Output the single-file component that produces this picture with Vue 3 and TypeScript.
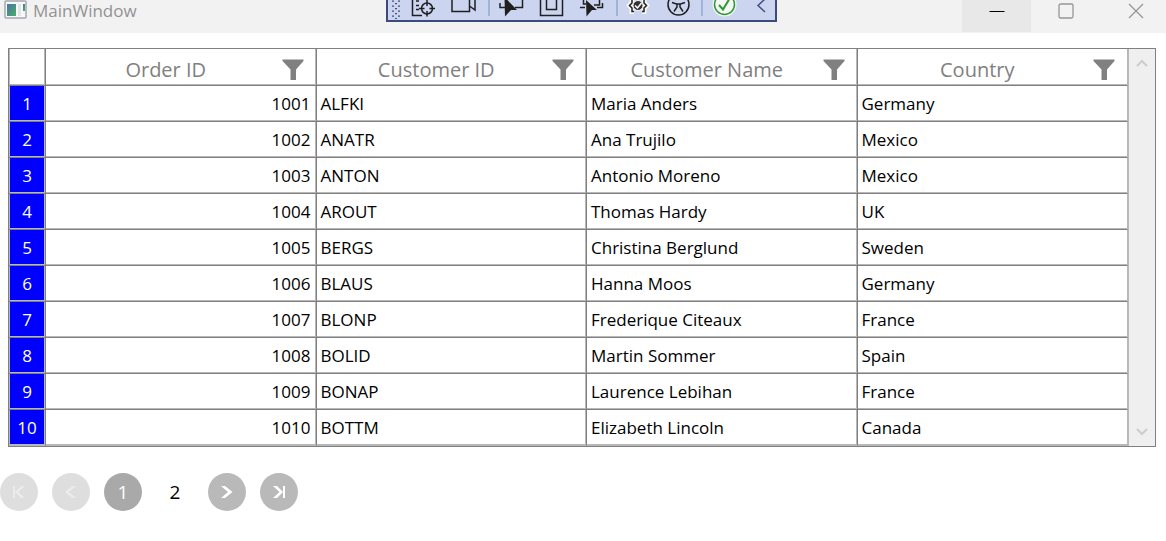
<script setup lang="ts">
interface Order {
  id: number
  customer: string
  name: string
  country: string
}

const columns: string[] = ['Order ID', 'Customer ID', 'Customer Name', 'Country']

const orders: Order[] = [
  { id: 1001, customer: 'ALFKI', name: 'Maria Anders', country: 'Germany' },
  { id: 1002, customer: 'ANATR', name: 'Ana Trujilo', country: 'Mexico' },
  { id: 1003, customer: 'ANTON', name: 'Antonio Moreno', country: 'Mexico' },
  { id: 1004, customer: 'AROUT', name: 'Thomas Hardy', country: 'UK' },
  { id: 1005, customer: 'BERGS', name: 'Christina Berglund', country: 'Sweden' },
  { id: 1006, customer: 'BLAUS', name: 'Hanna Moos', country: 'Germany' },
  { id: 1007, customer: 'BLONP', name: 'Frederique Citeaux', country: 'France' },
  { id: 1008, customer: 'BOLID', name: 'Martin Sommer', country: 'Spain' },
  { id: 1009, customer: 'BONAP', name: 'Laurence Lebihan', country: 'France' },
  { id: 1010, customer: 'BOTTM', name: 'Elizabeth Lincoln', country: 'Canada' },
]
</script>

<template>
  <div class="window">
    <header class="titlebar">
      <svg class="app-icon" width="24" height="20" viewBox="0 0 24 20">
        <defs>
          <linearGradient id="screen" x1="0" y1="0" x2="1" y2="1">
            <stop offset="0" stop-color="#4a72b0" />
            <stop offset="1" stop-color="#48b060" />
          </linearGradient>
        </defs>
        <rect x="1" y="1" width="21" height="17" rx="1" fill="#f8f8f8" stroke="#a4a8b0" stroke-width="1.500" />
        <rect x="3" y="4" width="9" height="12" fill="url(#screen)" />
        <rect x="14" y="4" width="3" height="12" fill="#e4e4e4" />
        <rect x="19" y="4" width="2" height="7" fill="url(#screen)" />
      </svg>
      <h1 class="title">MainWindow</h1>
      <div class="captions">
        <button class="caption hovered" aria-label="Minimize">
          <svg width="16" height="16" viewBox="0 0 16 16"><path d="M0.500 8.500H15.500" stroke="#000" /></svg>
        </button>
        <button class="caption" aria-label="Maximize">
          <svg width="16" height="16" viewBox="0 0 16 16"><rect x="1" y="1" width="14" height="14" rx="1.500" fill="none" stroke="#969696" stroke-width="1.300" /></svg>
        </button>
        <button class="caption close" aria-label="Close">
          <svg width="16" height="16" viewBox="0 0 16 16"><path d="M1 1L15 15M15 1L1 15" stroke="#969696" stroke-width="1.300" /></svg>
        </button>
      </div>
      <div class="debugbar">
        <svg width="387" height="20" viewBox="0 0 387 20" fill="none" stroke="#1f1f1f" stroke-width="1.500">
          <g stroke="#40507c" stroke-width="2" stroke-dasharray="1.300 3.700">
            <path d="M5 0.500V19M11 0.500V19" />
            <path d="M8 -2V19" />
          </g>
          <path d="M24.500 0V15.500H34M28 1H31M28 5.500H31M28 9.500H31" />
          <circle cx="39" cy="8.500" r="5.500" />
          <path d="M39 0V6M39 11V16.500M31 8.500H36.500M41.500 8.500H47" />
          <path d="M64 0V11.500H81.500V0M81.500 6L87 10V0" />
          <path d="M101 0V16" stroke="#93a5d0" />
          <path d="M112 3V7.500H117M127 7.500H134.500V0" />
          <path d="M116.500 -3L129 10H123L117 16.500Z" fill="#1f1f1f" stroke="none" />
          <path d="M152.500 0V15.500H174.500V0M158.500 0V9.500H168.500V0" />
          <path d="M192 7.500H197M209 7.500H214.500V3M206 5H211.500V0M195.500 0V4H198" />
          <path d="M198 0L209 10H204L198.500 16.500Z" fill="#1f1f1f" stroke="none" />
          <path d="M229 0V16" stroke="#93a5d0" />
          <g stroke="#f6f6f6" stroke-width="5">
            <path d="M244 0V3L241.500 5.500L244 8V11.500H246M256 0V3L258.500 5.500L256 8V11.500H254" />
          </g>
          <path d="M244 0V3L241.500 5.500L244 8V11.500H246M256 0V3L258.500 5.500L256 8V11.500H254" />
          <circle cx="250" cy="5.500" r="5" fill="#333" stroke="#f6f6f6" stroke-width="1" />
          <path d="M247 5.500L249.500 8L253.500 3" stroke="#fff" />
          <circle cx="290.500" cy="4.500" r="10.500" />
          <path d="M284 2.500L288.500 4H292.500L297 2.500M289 4V7L286 11.500M292 4V7L295 11.500" />
          <path d="M314 0V16" stroke="#93a5d0" />
          <circle cx="336.500" cy="4.500" r="10" fill="#f5f7f5" stroke="#f5f5f5" stroke-width="4" />
          <circle cx="336.500" cy="4.500" r="10" stroke="#2b9a33" />
          <path d="M331 5L335 9.500L341 -0.500" stroke="#2b9a33" stroke-width="2" />
          <path d="M377 -1L370 5.500L377 12" stroke="#40507c" />
        </svg>
      </div>
    </header>

    <main class="content">
      <section class="grid">
        <div class="rows">
          <table>
            <colgroup>
              <col class="index-col" />
              <col v-for="c in columns" :key="c" />
            </colgroup>
            <thead>
              <tr>
                <td></td>
                <th v-for="c in columns" :key="c" scope="col">
                  <div class="head">
                    <span class="label">{{ c }}</span>
                    <button class="filter" :aria-label="'Filter ' + c">
                      <svg width="22" height="22" viewBox="0 0 22 22"><path d="M0.500 0.500H21.500V2L14 10.500V20.500Q14 21 13.500 21H9Q8.500 21 8.500 20.500V10.500L0.500 2Z" fill="#808080" /></svg>
                    </button>
                  </div>
                </th>
              </tr>
            </thead>
            <tbody>
              <tr v-for="(o, i) in orders" :key="o.id">
                <th class="index" scope="row">{{ i + 1 }}</th>
                <td class="number">{{ o.id }}</td>
                <td>{{ o.customer }}</td>
                <td>{{ o.name }}</td>
                <td>{{ o.country }}</td>
              </tr>
            </tbody>
          </table>
        </div>
        <div class="scrollbar">
          <button aria-label="Scroll up"><svg width="12" height="8" viewBox="0 0 12 8"><path d="M1 7L6 2L11 7" /></svg></button>
          <button aria-label="Scroll down"><svg width="12" height="8" viewBox="0 0 12 8"><path d="M1 1L6 6L11 1" /></svg></button>
        </div>
      </section>
    </main>

    <nav class="pager" aria-label="Pages">
      <button class="round disabled" aria-label="First page" disabled>
        <svg width="14" height="12" viewBox="0 0 14 12"><path d="M1 0H3V12H1ZM9 0H13L6.500 6L13 12H9L3 6Z" /></svg>
      </button>
      <button class="round disabled" aria-label="Previous page" disabled>
        <svg width="14" height="12" viewBox="0 0 14 12"><path d="M8 0H12L5 6L12 12H8L1 6Z" /></svg>
      </button>
      <button class="round current" aria-current="page">1</button>
      <button class="round page">2</button>
      <button class="round" aria-label="Next page">
        <svg width="14" height="12" viewBox="0 0 14 12"><path d="M1 0H5L12.500 6L5 12H1L8 6Z" /></svg>
      </button>
      <button class="round" aria-label="Last page">
        <svg width="14" height="12" viewBox="0 0 14 12"><path d="M1 0H5L11 6L5 12H1L7.500 6ZM11 0H13V12H11Z" /></svg>
      </button>
    </nav>
  </div>
</template>

<style>
body {
  margin: 0;
  background: #fff;
}
</style>

<style scoped>
.window {
  font-family: "Segoe UI", "Open Sans", "Noto Sans", sans-serif;
  font-size: 17px;
  color: #000;
}
button {
  display: flex;
  align-items: center;
  justify-content: center;
  padding: 0;
  border: 0;
  background: none;
  font: inherit;
}
.titlebar {
  position: relative;
  display: flex;
  align-items: flex-start;
  height: 33px;
  padding-left: 4px;
  background: #f2f2f2;
}
.app-icon {
  flex: none;
}
.title {
  margin: 0 0 0 5px;
  font-size: 17px;
  line-height: 22px;
  font-weight: 400;
  color: #929292;
}
.captions {
  display: flex;
  margin-left: auto;
}
.caption {
  box-sizing: border-box;
  width: 69px;
  height: 32px;
  padding-bottom: 11px;
}
.close {
  width: 66px;
  padding-left: 6px;
}
.hovered {
  background: #e8e8e8;
}
.debugbar {
  position: absolute;
  top: 0;
  left: 386px;
  border: 2px solid #3c4a7d;
  border-top: 0;
  background: #ccd5f0;
}
.debugbar svg {
  display: block;
}
.content {
  padding: 15px 10px 0 8px;
}
.grid {
  display: flex;
  border: 1px solid #808080;
}
.rows {
  flex: 1;
  border-right: 1px solid #b8b8b8;
}
table {
  width: 100%;
  table-layout: fixed;
  border-collapse: separate;
  border-spacing: 0;
}
.index-col {
  width: 37px;
}
td,
th {
  box-sizing: border-box;
  height: 36px;
  padding: 0 5px 0 4px;
  border-right: 1px solid #808080;
  border-bottom: 1px solid #808080;
  box-shadow: inset -1px -1px #b8b8b8;
  font-weight: 400;
  line-height: 24px;
  text-align: left;
}
tr > :first-child {
  box-shadow: inset -1px -1px #b8b8b8, inset 1px 0 #b8b8b8;
}
tr > :last-child {
  border-right-color: #b8b8b8;
  box-shadow: inset 0 -1px #b8b8b8;
}
tbody tr:last-child > * {
  border-bottom-color: #b8b8b8;
}
thead td,
thead th {
  height: 37px;
}
.index {
  padding: 0;
  background: #00f;
  color: #fff;
  text-align: center;
}
.number {
  text-align: right;
}
.head {
  display: flex;
  align-items: center;
  padding: 5px 7px 0 0;
}
.label {
  flex: 1;
  font-size: 20px;
  text-align: center;
  color: #808080;
}
.scrollbar {
  display: flex;
  flex-direction: column;
  justify-content: space-between;
  width: 26px;
  background: #efefef;
}
.scrollbar button {
  height: 28px;
}
.scrollbar path {
  fill: none;
  stroke: #cdcdcd;
  stroke-width: 2;
}
.pager {
  display: flex;
  gap: 14px;
  padding-top: 26px;
}
.round {
  width: 38px;
  height: 38px;
  border-radius: 50%;
  background: #b9b9b9;
  color: #fff;
  font-size: 19px;
}
.round path {
  fill: #fff;
}
.disabled {
  background: #dedede;
}
.disabled path {
  fill: #ebebeb;
}
.current {
  background: #a9a9a9;
}
.page {
  background: none;
  color: #000;
}
</style>
